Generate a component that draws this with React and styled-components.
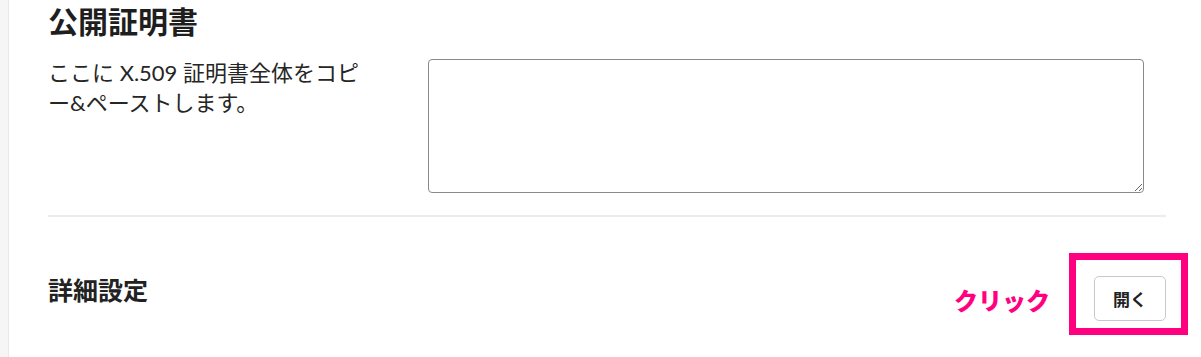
import React from 'react';
import styled, { createGlobalStyle } from 'styled-components';

const GlobalStyle = createGlobalStyle`
  html, body, #root {
    margin: 0;
    height: 100%;
  }
  body {
    background: #fff;
    color: #222;
    font-family: Lato, "Noto Sans CJK JP", sans-serif;
  }
`;

export default function App() {
  return (
    <>
      <GlobalStyle />
      <Page>
        <SideRail />
        <Content>
          <SectionTitle>公開証明書</SectionTitle>
          <FieldRow>
            <FieldHint>ここに X.509 証明書全体をコピー&ペーストします。</FieldHint>
            <CertInput />
          </FieldRow>
          <Divider />
          <AdvancedRow>
            <AdvancedTitle>詳細設定</AdvancedTitle>
            <ButtonSpot>
              <ClickNote>クリック</ClickNote>
              <HighlightFrame />
              <OpenButton type="button">開く</OpenButton>
            </ButtonSpot>
          </AdvancedRow>
        </Content>
      </Page>
    </>
  );
}

const Page = styled.div`
  display: flex;
  height: 100%;
  overflow: hidden;
`;

const SideRail = styled.div`
  flex: 0 0 8px;
  background: #f6f6f6;
  border-right: 1px solid #e9e9e9;
`;

const Content = styled.main`
  flex: 1;
  padding: 0 35px 0 39px;
  display: flex;
  flex-direction: column;
`;

const SectionTitle = styled.h2`
  margin: 0;
  font-size: 30px;
  line-height: 42px;
  font-weight: 700;
  color: #1e1e1e;
`;

const FieldRow = styled.div`
  display: flex;
  align-items: flex-start;
  margin-top: 16px;
`;

const FieldHint = styled.p`
  flex: 0 0 320px;
  margin: 0 60px 0 0;
  font-size: 22px;
  line-height: 30px;
  color: #262626;
`;

const CertInput = styled.textarea`
  box-sizing: border-box;
  width: 716px;
  height: 134px;
  margin-top: 1px;
  border: 1px solid #8a8a8a;
  border-radius: 4px;
  background: #fff;
  font: inherit;
`;

const Divider = styled.hr`
  margin: 22px 0 0;
  border: 0;
  height: 2px;
  background: #ececec;
`;

const AdvancedRow = styled.div`
  display: flex;
  align-items: flex-start;
  justify-content: space-between;
  padding-top: 57px;
`;

const AdvancedTitle = styled.h3`
  margin: 0;
  font-size: 25px;
  line-height: 32px;
  font-weight: 700;
  color: #222;
`;

const ButtonSpot = styled.div`
  position: relative;
  margin-top: 2px;
`;

const OpenButton = styled.button`
  box-sizing: border-box;
  width: 72px;
  height: 45px;
  border: 1px solid #c9c9c9;
  border-radius: 5px;
  background: #fff;
  color: #222;
  font-family: Lato, "Noto Sans CJK JP", sans-serif;
  font-size: 17px;
  font-weight: 700;
  cursor: pointer;
`;

const HighlightFrame = styled.div`
  position: absolute;
  left: -25px;
  right: -22px;
  top: -23px;
  bottom: -14px;
  border: 7px solid #ff0080;
  pointer-events: none;
`;

const ClickNote = styled.span`
  position: absolute;
  right: calc(100% + 44px);
  top: 9px;
  white-space: nowrap;
  font-family: "Noto Sans CJK JP", sans-serif;
  font-size: 24px;
  line-height: 30px;
  font-weight: 900;
  color: #ff0080;
`;
